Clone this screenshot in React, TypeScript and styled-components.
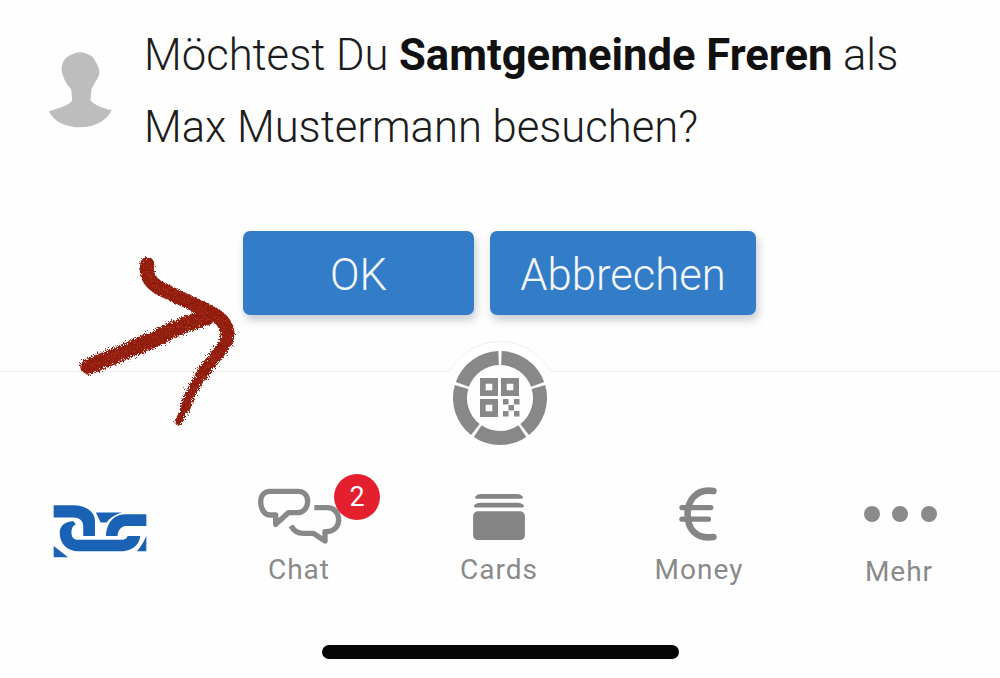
import React from "react";
import styled, { createGlobalStyle } from "styled-components";

const Global = createGlobalStyle`
  html, body { margin: 0; padding: 0; background: #fefefe; }
  body { font-family: Roboto, "Liberation Sans", sans-serif; }
`;

const Page = styled.div`
  position: relative;
  width: 1000px;
  height: 678px;
  overflow: hidden;
  background: #fefefe;
  display: flex;
  flex-direction: column;
`;

const Message = styled.section`
  display: flex;
  align-items: flex-start;
  gap: 30px;
  padding: 20px 0 0 47px;
`;

const Avatar = styled.svg`
  flex: none;
  width: 67px;
  height: 78px;
  margin-top: 30px;
`;

const MessageText = styled.p`
  margin: 0;
  font-size: 43.6px;
  font-weight: 300;
  line-height: 72px;
  color: #1c1c1c;
  white-space: nowrap;
  b { font-weight: 700; color: #111; }
`;

const Actions = styled.div`
  display: flex;
  gap: 16px;
  padding: 67px 0 0 243px;
`;

const ActionButton = styled.button<{ $w: number }>`
  width: ${(p) => p.$w}px;
  height: 84px;
  padding: 4px 0 0;
  border: 0;
  border-radius: 7px;
  background: #337dc8;
  box-shadow: 2px 5px 8px rgba(60, 70, 90, 0.28);
  color: #f4f8fc;
  font-family: Roboto, "Liberation Sans", sans-serif;
  font-size: 43.6px;
  font-weight: 300;
`;

const Dock = styled.nav`
  position: relative;
  margin-top: 56px;
  border-top: 1px solid #ececec;
  padding-top: 110px;
`;

const Hub = styled.svg`
  position: absolute;
  left: 440px;
  top: -32px;
  width: 120px;
  height: 118px;
`;

const Tabs = styled.div`
  display: grid;
  grid-template-columns: repeat(5, 200px);
`;

const Tab = styled.div`
  display: flex;
  flex-direction: column;
  align-items: center;
  color: #8a8a8a;
  font-size: 28px;
  letter-spacing: 1px;
  line-height: 32px;
`;

const TabLabel = styled.span<{ $drop?: number }>`
  padding-top: ${(p) => p.$drop ?? 0}px;
  margin-left: -2px;
`;

const IconSlot = styled.div`
  position: relative;
  height: 72px;
  display: flex;
  align-items: center;
  justify-content: center;
`;

const Logo = styled.svg`
  width: 94px;
  height: 54px;
  margin-top: 25px;
`;

const ChatIcon = styled.svg`
  width: 90px;
  height: 62px;
  margin-top: -4px;
`;

const Badge = styled.span`
  position: absolute;
  left: 79px;
  top: -8px;
  width: 46px;
  height: 46px;
  border-radius: 50%;
  background: #e4202e;
  color: #fff;
  font-size: 27px;
  font-weight: 400;
  letter-spacing: 0;
  line-height: 46px;
  text-align: center;
`;

const CardsIcon = styled.svg`
  width: 52px;
  height: 48px;
  margin: -1px 3px 0 0;
`;

const EuroIcon = styled.svg`
  width: 43px;
  height: 58px;
  margin: -8px 0 0 -3px;
`;

const DotsIcon = styled.svg`
  width: 74px;
  height: 20px;
  margin: -8px 1px 0 0;
`;

const HomeBar = styled.div`
  position: absolute;
  left: 322px;
  top: 645px;
  width: 357px;
  height: 14px;
  border-radius: 7px;
  background: #050505;
`;

const Arrow = styled.svg`
  position: absolute;
  left: 70px;
  top: 220px;
  width: 240px;
  height: 220px;
  pointer-events: none;
`;

const arc = (a0: number, a1: number, r: number) => {
  const p = (a: number) => {
    const t = ((a - 90) * Math.PI) / 180;
    return `${(60 + r * Math.cos(t)).toFixed(2)} ${(58 + r * Math.sin(t)).toFixed(2)}`;
  };
  return `M${p(a0)} A${r} ${r} 0 0 1 ${p(a1)}`;
};

const Finder = ({ x, y }: { x: number; y: number }) => (
  <path
    fillRule="evenodd"
    fill="#888"
    d={`M${x} ${y}h18v18h-18z M${x + 5.7} ${y + 5.7}v6.6h6.6v-6.6z`}
  />
);

const HubIcon = () => (
  <Hub viewBox="0 0 120 118">
    <path d="M60 0 A58 58 0 0 0 9 32 L111 32 A58 58 0 0 0 60 0Z" fill="#fefefe" />
    <path d="M9.5 31 A58 58 0 0 1 110.5 31" fill="none" stroke="#f0f0f0" strokeWidth="1" />
    <rect x="11" y="31" width="98" height="3" fill="#fefefe" />
    {[0, 72, 144, 216, 288].map((a) => (
      <path key={a} d={arc(a + 2, a + 70, 40)} fill="none" stroke="#888" strokeWidth="14" />
    ))}
    <Finder x={40} y={38} />
    <Finder x={61} y={38} />
    <Finder x={40} y={59} />
    <path
      fill="#888"
      d="M63 59h5.5v5.5h-5.5z M74 59h5.5v5.5h-5.5z M68.5 65h5.5v5.5h-5.5z M63 71h5.5v5.5h-5.5z M74 71h5.5v5.5h-5.5z"
    />
  </Hub>
);

export default function App() {
  return (
    <Page>
      <Global />
      <Message>
        <Avatar viewBox="50 60 200 235">
          <path
            fill="#bdbdbd"
            d="M150 67 C170 70 188 76 195 95 C205 110 208 122 206 135 C200 150 190 160 183 180 L180 212 C195 228 222 236 244 241 C232 270 195 293 150 293 C105 293 70 275 55 245 C80 235 112 230 125 212 L122 178 C110 165 100 150 97 135 C90 120 92 100 105 85 C118 74 135 68 150 67Z"
          />
        </Avatar>
        <MessageText>
          Möchtest Du <b>Samtgemeinde Freren</b> als
          <br />
          Max Mustermann besuchen?
        </MessageText>
      </Message>

      <Actions>
        <ActionButton $w={231}>OK</ActionButton>
        <ActionButton $w={266}>Abbrechen</ActionButton>
      </Actions>

      <Dock>
        <HubIcon />
        <Tabs>
          <Tab>
            <IconSlot>
              <Logo viewBox="40 100 280 160">
                <g fill="#1a62b4">
                  <path d="M42 103 H100 C140 103 165 125 165 150 V195 H130 V165 C130 150 118 140 100 140 H42Z" />
                  <path d="M100 150 C75 152 60 165 60 185 C60 220 85 240 115 240 H250 C280 238 298 218 300 195 H262 C260 203 255 206 245 206 H115 C102 206 95 198 95 185 C95 170 100 165 108 160Z" />
                  <path d="M168 125 H245 C222 133 208 142 200 155 L182 155Z" />
                  <path d="M318 130 V165 H255 C240 167 234 180 232 195 H198 C198 165 215 130 255 130Z" />
                  <path d="M42 225 L85 258 H42Z" />
                  <path d="M318 195 V240 H290 C302 228 310 212 318 195Z" />
                </g>
              </Logo>
            </IconSlot>
            <TabLabel>&nbsp;</TabLabel>
          </Tab>
          <Tab>
            <IconSlot>
              <ChatIcon viewBox="30 60 270 186">
                <g fill="none" stroke="#888" strokeWidth="16" strokeLinejoin="round">
                  <path d="M75 79 H160 C178 79 188 92 188 110 C188 128 175 143 158 143 H130 L92 178 V150 H75 C58 150 47 130 47 112 C47 92 58 79 75 79Z" />
                  <path d="M208 128 H248 C268 128 281 145 281 165 C281 185 265 200 245 200 H240 V228 L205 205 H175 C155 205 145 195 138 182" />
                </g>
              </ChatIcon>
              <Badge>2</Badge>
            </IconSlot>
            <TabLabel>Chat</TabLabel>
          </Tab>
          <Tab>
            <IconSlot>
              <CardsIcon viewBox="0 0 54 50">
                <g fill="#858585">
                  <path d="M4 5 C2 5 1 3 3 2 C4 1 6 0 8 0 H46 C48 0 50 1 51 2 C53 3 52 5 50 5Z" />
                  <path d="M3 14 C1 14 0 12 2 11 C3 10 5 9 7 9 H47 C49 9 51 10 52 11 C54 12 53 14 51 14Z" />
                  <rect x="0" y="18" width="54" height="30" rx="5" />
                </g>
              </CardsIcon>
            </IconSlot>
            <TabLabel>Cards</TabLabel>
          </Tab>
          <Tab>
            <IconSlot>
              <EuroIcon viewBox="680 30 130 175">
                <g fill="none" stroke="#858585" strokeLinecap="round">
                  <path strokeWidth="20" d="M790 48 C735 40 712 80 712 118 C712 160 735 195 790 187" />
                  <path strokeWidth="16" d="M695 98 H782" />
                  <path strokeWidth="16" d="M695 133 H775" />
                </g>
              </EuroIcon>
            </IconSlot>
            <TabLabel>Money</TabLabel>
          </Tab>
          <Tab>
            <IconSlot>
              <DotsIcon viewBox="0 0 74 20">
                <g fill="#8a8a8a">
                  <circle cx="9" cy="10" r="8" />
                  <circle cx="37" cy="10" r="8" />
                  <circle cx="66" cy="10" r="8" />
                </g>
              </DotsIcon>
            </IconSlot>
            <TabLabel $drop={2}>Mehr</TabLabel>
          </Tab>
        </Tabs>
      </Dock>

      <HomeBar />

      <Arrow viewBox="0 0 720 660">
        <defs>
          <filter id="rough" x="-10%" y="-10%" width="120%" height="120%">
            <feTurbulence type="fractalNoise" baseFrequency="0.5" numOctaves="2" seed="4" result="n" />
            <feDisplacementMap in="SourceGraphic" in2="n" scale="24" result="d" />
            <feColorMatrix
              in="n"
              type="matrix"
              values="0 0 0 0 0.42  0 0 0 0 0.04  0 0 0 0 0.02  4 0 0 0 -2"
              result="sp"
            />
            <feComposite in="sp" in2="d" operator="in" result="spk" />
            <feMerge>
              <feMergeNode in="d" />
              <feMergeNode in="spk" />
            </feMerge>
          </filter>
        </defs>
        <g filter="url(#rough)" fill="none" stroke="#8f1a0c" strokeLinecap="round" strokeLinejoin="round">
          <path strokeWidth="42" d="M232 132 C225 165 240 190 275 208 C320 230 380 255 430 282 C465 302 478 330 470 358" />
          <path strokeWidth="48" d="M55 440 C130 410 190 385 250 358 C300 335 345 310 410 292" />
          <path strokeWidth="38" d="M470 358 C455 395 420 425 395 465" />
          <path strokeWidth="32" d="M395 465 C370 500 355 530 345 565" />
          <path strokeWidth="22" d="M345 565 C338 580 332 590 325 605" />
        </g>
      </Arrow>
    </Page>
  );
}
